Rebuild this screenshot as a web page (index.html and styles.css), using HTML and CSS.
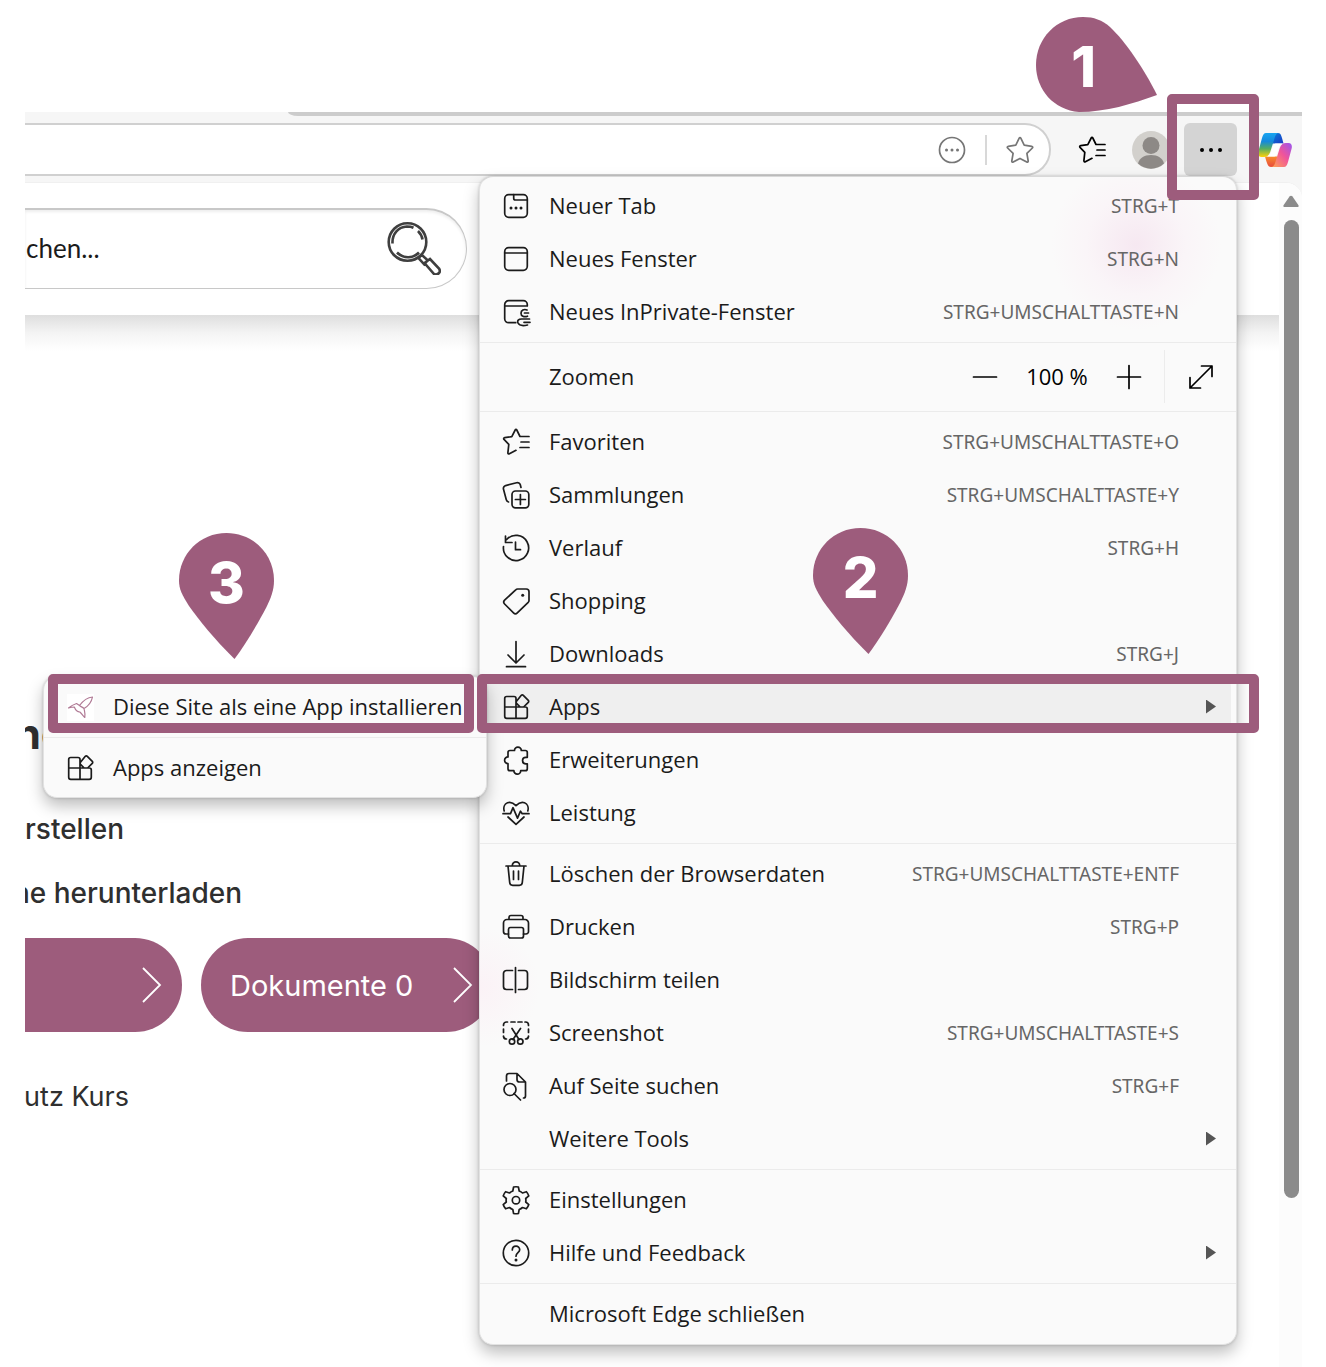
FILE: index.html
```html
<!DOCTYPE html>
<html lang="de">
<head>
<meta charset="utf-8">
<meta name="viewport" content="width=device-width, initial-scale=1">
<title>App in Microsoft Edge installieren</title>
<link rel="stylesheet" href="styles.css">
</head>
<body>
<svg class="sprite" aria-hidden="true">
  <symbol id="i-star-list" viewBox="0 0 32 32"><path d="M20 10.500h9M21 16h8M20 21.500h9M29 10.500h-9l-3.200-6.500c-.4-.8-1.200-.8-1.600 0L11.800 10.700l-7.100 1c-1 .2-1.300 1-.7 1.700l4.800 5-.9 8.300c-.1 1 .7 1.500 1.500 1.100l6.600-3.500"/></symbol>
  <symbol id="i-apps" viewBox="0 0 32 32"><path d="M16 16V7.500a2 2 0 0 0-2-2H6.700a2 2 0 0 0-2 2v17.800a2 2 0 0 0 2 2h18.600a2 2 0 0 0 2-2V18a2 2 0 0 0-2-2zM4.700 16H16v11.300M21.300 4.300a1.400 1.400 0 0 1 2 0l5 5a1.400 1.400 0 0 1 0 2l-4.700 4.700h-3.400l-3.700-3.700a1.400 1.400 0 0 1 0-2z"/></symbol>
</svg>
<div class="browser">
  <div class="tab-edge"></div>
  <header class="toolbar">
    <div class="address">
      <input class="address-input" type="text" aria-label="Adresse">
      <button class="tool" aria-label="Weitere Seitenaktionen"><svg class="icon grey" viewBox="0 0 32 32"><circle cx="16" cy="16" r="12.500"/><path class="dots" d="M10.500 16h.01M16 16h.01M21.500 16h.01"/></svg></button>
      <span class="address-divider"></span>
      <button class="tool" aria-label="Zu Favoriten hinzufügen"><svg class="icon grey" viewBox="0 0 32 32"><path d="M15.200 4.200c.4-.8 1.200-.8 1.600 0l3.400 7 7.600 1.100c.9.100 1.200 1.100.6 1.700l-5.500 5.400 1.300 7.600c.1.900-.7 1.500-1.400 1.100L16 24.400l-6.800 3.700c-.8.400-1.500-.2-1.400-1.100l1.300-7.600L3.600 14c-.6-.6-.3-1.600.6-1.700l7.600-1.100z"/></svg></button>
    </div>
    <button class="tool favorites" aria-label="Favoriten"><svg class="icon"><use href="#i-star-list"/></svg></button>
    <button class="tool profile" aria-label="Profil"><svg class="avatar" viewBox="0 0 38 38"><circle cx="19" cy="19" r="19" fill="#d2d0cc"/><circle cx="19" cy="14.500" r="8.500" fill="#8d8986"/><path d="M6 32.500C7.500 27 12 24 19 24s11.500 3 13 8.500A19 19 0 0 1 6 32.500z" fill="#8d8986"/></svg></button>
    <div class="more-wrap">
      <button class="more" aria-label="Einstellungen und mehr"><svg class="icon" viewBox="0 0 32 32"><path class="big-dots" d="M7 16h.01M16 16h.01M25 16h.01"/></svg></button>
      <span class="marker marker-more"></span>
      <div class="pin pin-one">
        <svg viewBox="0 0 121 95" width="121" height="95"><path d="M47 0C58 0 66 3 74 10C90 25 108 52 121 78C96 87 70 95 43 95C18 93 0 73 0 48C0 21 21 0 47 0z"/></svg>
        <span>1</span>
      </div>
    </div>
    <button class="tool copilot" aria-label="Copilot">
      <svg viewBox="0 0 34 34" width="34" height="34">
        <defs>
          <linearGradient id="ca" x1="0" y1="0" x2="0" y2="1"><stop offset="0" stop-color="#19a5f0"/><stop offset=".35" stop-color="#1489dd"/><stop offset=".65" stop-color="#55ad62"/><stop offset="1" stop-color="#ffd208"/></linearGradient>
          <linearGradient id="cb" x1="1" y1="0" x2="0" y2="1"><stop offset="0" stop-color="#9a55f0"/><stop offset=".45" stop-color="#f0549a"/><stop offset="1" stop-color="#ffa94f"/></linearGradient>
          <linearGradient id="cc" x1="0" y1="0" x2="1" y2="1"><stop offset="0" stop-color="#0b7fd8"/><stop offset="1" stop-color="#1b38c4"/></linearGradient>
          <linearGradient id="cd" x1="0" y1="0" x2="0" y2="1"><stop offset="0" stop-color="#f78b2c"/><stop offset="1" stop-color="#e84a3c"/></linearGradient>
        </defs>
        <path d="M14 0h6c3 0 3.500 3 5.500 10.500H14z" fill="url(#cc)"/>
        <path d="M20 34h-7c-3 0-4-3-6-10.500h12z" fill="url(#cd)"/>
        <path d="M8 0h13c-3 0-3.800 3-5 7l-3.800 12C11 22.500 9 24 6 24H3.500C.5 24-.5 21 .5 18L4 5c1-3.500 2-5 4-5z" fill="url(#ca)"/>
        <path d="M26 34H13c3 0 3.800-3 5-7l3.800-12c1.200-3.500 3.200-5 6.200-5h2.500c3 0 4 3 3 6L30 29c-1 3.500-2 5-4 5z" fill="url(#cb)"/>
        <path d="M19 10.500h6c-2.500.7-3.500 2.500-4.300 5l-1.500 5c-.8 2.500-2 3-4.200 3H9c2.500-.7 3.500-2.500 4.300-5l1.500-5c.8-2.500 2-3 4.200-3z" fill="#fff"/>
      </svg>
    </button>
  </header>

  <div class="viewport">
    <div class="site">
      <div class="site-header">
        <div class="search">
          <input class="search-input" type="text" aria-label="Suchen" value="chen...">
          <button class="tool" aria-label="Suche starten"><svg class="magnifier" viewBox="0 0 54 54"><circle cx="20.500" cy="21" r="18.800"/><path d="M5.500 22.500C5 13 11 6 20 5.500c2.500 0 4.500.3 6.500 1.200M31 10c2.500 2.500 4 5 4.500 8.500M10 31.500c6 6 16 6.500 22 0M31.500 37l3.200-3.200 6 5.500-3.500 4zM37.500 42l5.500-4 9 9.500c2.500 4-1.500 7-5 5.500z"/></svg></button>
        </div>
      </div>
      <main class="content">
        <h1 class="cut cut-title">ne</h1>
        <p class="cut cut-create">erstellen</p>
        <p class="cut cut-download">ne herunterladen</p>
        <div class="pills">
          <a class="pill pill-cut" href="#" aria-label="Weiter"><svg class="chevron" viewBox="0 0 20 36"><path d="M1 1l17 17L1 35"/></svg></a>
          <a class="pill" href="#"><span>Dokumente 0</span><svg class="chevron" viewBox="0 0 20 36"><path d="M1 1l17 17L1 35"/></svg></a>
        </div>
        <p class="cut cut-course">utz Kurs</p>
      </main>
    </div>
    <div class="scrollbar"><svg viewBox="0 0 16 13" width="16" height="13"><path d="M6.500 1.500a2 2 0 0 1 3 0l5.800 8.500c.8 1.200.2 2-1 2H1.700c-1.200 0-1.800-.8-1-2z" fill="#8b8b8b"/></svg><div class="thumb"></div></div>
  </div>

  <nav class="menu" aria-label="Einstellungen und mehr">
    <ul>
      <li><button class="item"><svg class="icon" viewBox="0 0 32 32"><rect x="4.700" y="4.700" width="22.600" height="22.600" rx="4"/><path d="M13.700 4.700v3.500a1.800 1.800 0 0 0 1.800 1.800h11.800"/><path class="dots" d="M11 18h.01M16 18h.01M21 18h.01"/></svg><span>Neuer Tab</span><kbd>STRG+T</kbd></button></li>
      <li><button class="item"><svg class="icon" viewBox="0 0 32 32"><rect x="4.700" y="4.700" width="22.600" height="22.600" rx="4"/><path d="M4.700 10h22.600"/></svg><span>Neues Fenster</span><kbd>STRG+N</kbd></button></li>
      <li><button class="item"><svg class="icon" viewBox="0 0 32 32"><path d="M15.700 26.700h-7a4 4 0 0 1-4-4v-14a4 4 0 0 1 4-4h14.600a4 4 0 0 1 4 4V10H4.700M27 14c-3-1.300-6 .3-6 3.200s3 4.300 6.500 3M24.500 17h4M29.500 23h-8c-3 0-4.500 1.800-3.500 4s5 3 9.500 2M24 26.300h6"/></svg><span>Neues InPrivate-Fenster</span><kbd>STRG+UMSCHALTTASTE+N</kbd></button></li>
    </ul>
    <hr>
    <div class="zoom-row">
      <span class="zoom-label">Zoomen</span>
      <button class="zoom-button" aria-label="Verkleinern"><svg class="icon" viewBox="0 0 32 32"><path d="M4.500 16h23"/></svg></button>
      <span class="zoom-value">100 %</span>
      <button class="zoom-button" aria-label="Vergrößern"><svg class="icon" viewBox="0 0 32 32"><path d="M4.500 16h23M16 4.500v23"/></svg></button>
      <button class="fullscreen" aria-label="Vollbild"><svg class="icon" viewBox="0 0 32 32"><path d="M5 27L27 5M16.500 5H27v10.500M5 16.500V27h10.500"/></svg></button>
    </div>
    <hr>
    <ul>
      <li><button class="item"><svg class="icon"><use href="#i-star-list"/></svg><span>Favoriten</span><kbd>STRG+UMSCHALTTASTE+O</kbd></button></li>
      <li><button class="item"><svg class="icon" viewBox="0 0 32 32"><rect x="12" y="12" width="16.800" height="16.800" rx="3.500"/><path d="M20.400 15.500v10M15.400 20.500h10M21 8.500l-.7-2.700a3 3 0 0 0-3.700-2.100L5.600 6.600a3 3 0 0 0-2.100 3.700l2.800 10.500a3 3 0 0 0 2.200 2.200"/></svg><span>Sammlungen</span><kbd>STRG+UMSCHALTTASTE+Y</kbd></button></li>
      <li><button class="item"><svg class="icon" viewBox="0 0 32 32"><path d="M3.500 14.500a12.600 12.600 0 1 0 3.200-7M5.500 4v6.500H12M15.500 10v7.700h5"/></svg><span>Verlauf</span><kbd>STRG+H</kbd></button></li>
      <li><button class="item"><svg class="icon" viewBox="0 0 32 32"><path d="M17.600 4h8.700A2.700 2.700 0 0 1 29 6.700v8.700c0 .7-.3 1.300-.8 1.900L17.300 27.900a2.700 2.700 0 0 1-3.800 0L4.600 19a2.700 2.700 0 0 1 0-3.800L15.700 4.800c.5-.5 1.200-.8 1.900-.8z"/><path class="dots" d="M22.700 10.300h.01"/></svg><span>Shopping</span></button></li>
      <li><button class="item"><svg class="icon" viewBox="0 0 32 32"><path d="M16 3.500v21M8 17l8 8 8-8M6.500 28.700h19"/></svg><span>Downloads</span><kbd>STRG+J</kbd></button></li>
      <li class="has-submenu">
        <button class="item active"><svg class="icon"><use href="#i-apps"/></svg><span>Apps</span><i class="arrow"></i></button>
        <div class="menu submenu">
          <ul>
            <li class="has-submenu">
              <button class="item"><svg class="icon bird" viewBox="0 0 32 32"><rect width="27" height="27" x="3" y="3"/><path d="M4.500 17c3-2.500 5-3.500 8-4.500l3 2c3-4 7-8 13-8.500-1 5-4 9-8.500 11.500.5 3 1.500 5 .8 9-2.500-2-3-4-5-5.500-3 0-4.300-2-5.500-5-2 0-4 .5-5.800 1zM16 15c1.500 1 2.500 1 4 2.500"/></svg><span>Diese Site als eine App installieren</span></button>
              <span class="marker marker-install"></span>
              <div class="pin pin-three">
                <svg viewBox="0 0 95 126" width="95" height="126"><path d="M47.500 0C74 0 95 21 95 47.500C95 57 92 65 87 75C78 92 66 112 55.500 126C36 107 20 87 10 73C3 62 0 56 0 47.500C0 21 21 0 47.500 0z"/></svg>
                <span>3</span>
              </div>
            </li>
          </ul>
          <hr>
          <ul>
            <li><button class="item"><svg class="icon"><use href="#i-apps"/></svg><span>Apps anzeigen</span></button></li>
          </ul>
        </div>
        <span class="marker marker-apps"></span>
        <div class="pin pin-two">
          <svg viewBox="0 0 95 126" width="95" height="126"><path d="M47.500 0C74 0 95 21 95 47.500C95 57 92 65 87 75C78 92 66 112 55.500 126C36 107 20 87 10 73C3 62 0 56 0 47.500C0 21 21 0 47.500 0z"/></svg>
          <span>2</span>
        </div>
      </li>
      <li><button class="item"><svg class="icon" viewBox="0 0 32 32"><path d="M14.500 6.500a3.400 3.400 0 0 1 6.800 0h4a2 2 0 0 1 2 2v4.800h-1.500a3.200 3.200 0 0 0 0 6.500h1.500v4.900a2 2 0 0 1-2 2h-4.600a3.400 3.400 0 0 1-6.800 0H10a2 2 0 0 1-2-2v-5a3.400 3.400 0 0 1 0-6.800V8.500a2 2 0 0 1 2-2z"/></svg><span>Erweiterungen</span></button></li>
      <li><button class="item"><svg class="icon" viewBox="0 0 32 32"><path d="M4.200 14c-1-3.500.2-7 3.300-8.300 3.500-1.300 6 .3 8.500 3 2.500-2.700 5-4.300 8.500-3 3.100 1.300 4.300 4.800 3.300 8.300M3 16.700h7.500l2.500-6 4.500 10.500 3-7 1.700 2.500H29M8 20l8 7.300 8-7.300"/></svg><span>Leistung</span></button></li>
    </ul>
    <hr>
    <ul>
      <li><button class="item"><svg class="icon" viewBox="0 0 32 32"><path d="M6 8h20M12.300 8V7.500a3.700 3.700 0 0 1 7.400 0V8M8 8l1.700 16.500a3 3 0 0 0 3 2.800h6.600a3 3 0 0 0 3-2.800L24 8M13.500 13v8.500M18.500 13v8.500"/></svg><span>Löschen der Browserdaten</span><kbd>STRG+UMSCHALTTASTE+ENTF</kbd></button></li>
      <li><button class="item"><svg class="icon" viewBox="0 0 32 32"><path d="M9 8.500V6.500a2 2 0 0 1 2-2h10a2 2 0 0 1 2 2v2M8.500 23H6a2.500 2.500 0 0 1-2.500-2.500V12A3.500 3.500 0 0 1 7 8.500h18a3.500 3.500 0 0 1 3.500 3.500v8.500A2.500 2.500 0 0 1 26 23h-2.500"/><rect x="8.500" y="16.500" width="15" height="10.500" rx="2"/></svg><span>Drucken</span><kbd>STRG+P</kbd></button></li>
      <li><button class="item"><svg class="icon" viewBox="0 0 32 32"><path d="M15.500 3.500v25M12.500 6.500H6.500a3 3 0 0 0-3 3v13a3 3 0 0 0 3 3h6M18.500 6.500h6a3 3 0 0 1 3 3v13a3 3 0 0 1-3 3h-6"/></svg><span>Bildschirm teilen</span></button></li>
      <li><button class="item"><svg class="icon" viewBox="0 0 32 32"><path d="M3.500 8.500V8a3 3 0 0 1 3-3h1M11 5h4M18 5h4M25 5h.5a3 3 0 0 1 3 3v.5M3.500 12v3.500M28.500 12v3.500M3.500 19v.500a3 3 0 0 0 3 2.500M28.500 19v.500a3 3 0 0 1-3 2.500M12 11.500l7 11M20.500 11.500l-7.500 11"/><circle cx="12" cy="24.500" r="2.700"/><circle cx="20.300" cy="24.500" r="2.700"/></svg><span>Screenshot</span><kbd>STRG+UMSCHALTTASTE+S</kbd></button></li>
      <li><button class="item"><svg class="icon" viewBox="0 0 32 32"><path d="M6.500 11V6a2.500 2.500 0 0 1 2.500-2.500h8l8.500 8.500v14a2 2 0 0 1-2 2M17 3.500V9.500a2.500 2.500 0 0 0 2.500 2.500h6M14 23.500l6.500 6.500"/><circle cx="10" cy="19.500" r="6"/></svg><span>Auf Seite suchen</span><kbd>STRG+F</kbd></button></li>
      <li><button class="item no-icon"><span>Weitere Tools</span><i class="arrow"></i></button></li>
    </ul>
    <hr>
    <ul>
      <li><button class="item"><svg class="icon" viewBox="0 0 32 32"><path d="M13.600 3q2.400-.5 4.800 0l.8 4q2 .8 3.300 2l3.900-1.300q1.700 1.900 2.400 4.200L25.700 14.500q.4 2 0 3.500l3.100 2.600q-.7 2.300-2.400 4.200l-3.900-1.300q-1.400 1.200-3.300 2l-.8 4q-2.400.5-4.800 0l-.8-4q-1.900-.8-3.300-2L5.600 24.800Q3.900 22.900 3.200 20.600L6.300 18q-.4-1.500 0-3.500L3.200 11.900q.7-2.300 2.400-4.200L9.500 9q1.400-1.200 3.300-2z"/><circle cx="16" cy="16.200" r="3.700"/></svg><span>Einstellungen</span></button></li>
      <li><button class="item"><svg class="icon" viewBox="0 0 32 32"><circle cx="16" cy="16" r="12.700"/><path d="M12.300 13c0-5 7.400-5 7.400-.3 0 3-3.700 3-3.700 6.500"/><path class="dots" d="M16 23h.01"/></svg><span>Hilfe und Feedback</span><i class="arrow"></i></button></li>
    </ul>
    <hr>
    <ul>
      <li><button class="item no-icon"><span>Microsoft Edge schließen</span></button></li>
    </ul>
  </nav>
</div>
</body>
</html>
```
FILE: styles.css
```css
* { box-sizing: border-box; }

:root {
  --plum: #9d5c7c;
  --menu: #fafafa;
}

body {
  margin: 0;
  background: #fff;
  color: #1b1b1b;
  font-family: "Open Sans", "Noto Sans", sans-serif;
}

button, input { font: inherit; color: inherit; }
button { border: 0; background: none; padding: 0; }
ul { list-style: none; margin: 0; padding: 0; }
.sprite { position: absolute; width: 0; height: 0; }

/* Browser window */
.browser {
  position: relative;
  display: flex;
  flex-direction: column;
  min-height: calc(100vh - 112px);
  margin: 112px 24px 0 25px;
  background: #f6f6f6;
}

.tab-edge {
  height: 4px;
  margin-left: 263px;
  background: #ccc;
  border-bottom-left-radius: 10px 4px;
}

.toolbar {
  display: flex;
  align-items: center;
  padding: 7px 10px 6px 0;
}

.address {
  display: flex;
  flex: 1;
  align-items: center;
  height: 53px;
  padding-right: 13px;
  background: #fff;
  border: 2px solid #d0d0d0;
  border-left: 0;
  border-radius: 0 26px 26px 0;
}

.address-input, .search-input {
  flex: 1;
  min-width: 0;
  padding: 0;
  border: 0;
  outline: 0;
  background: none;
}

.address-divider {
  width: 2px;
  height: 30px;
  margin: 0 17px;
  background: #d8d8d8;
}

.tool { display: flex; flex: none; }
.favorites { margin-left: 25px; color: #000; }
.profile { margin-left: 24px; }
.avatar { width: 38px; height: 38px; }
.copilot { margin-left: 21px; }

.icon {
  flex: none;
  width: 32px;
  height: 32px;
  fill: none;
  stroke: currentColor;
  stroke-width: 1.7;
  stroke-linecap: round;
  stroke-linejoin: round;
}
.icon.grey { color: #767676; }
.icon .dots { stroke-width: 3; }
.icon .big-dots { stroke-width: 4; }

.more-wrap { position: relative; margin-left: 14px; }
.more {
  display: flex;
  align-items: center;
  justify-content: center;
  width: 53px;
  height: 53px;
  color: #000;
  background: #d4d4d4;
  border-radius: 6px;
}

/* Web page */
.viewport {
  display: flex;
  flex: 1;
  background: #fff;
  border-top: 1px solid #f0f0f0;
  border-top-right-radius: 16px;
}
.site { flex: 1; min-width: 0; overflow: hidden; }
.site-header { height: 132px; padding-top: 25px; }

.search {
  display: flex;
  align-items: center;
  width: 442px;
  height: 81px;
  padding: 0 25px 2px 1px;
  border: solid #c8c8c8;
  border-width: 2px 1px 1px 0;
  border-radius: 0 41px 41px 0;
  box-shadow: inset 0 2px 3px #eee;
  font: 26px Lato, sans-serif;
}
.magnifier {
  width: 54px;
  height: 54px;
  fill: none;
  stroke: #3f3f3f;
  stroke-width: 2.6;
}

.content {
  padding-top: 389px;
  background: linear-gradient(#dedede, #f4f4f4 18px, #fff 36px) no-repeat 0 0 / 100% 36px;
  color: #2f2f2f;
  font-family: Inter, sans-serif;
}
.cut {
  display: flex;
  justify-content: flex-end;
  margin: 0;
  overflow: hidden;
  white-space: nowrap;
}
.cut-title { width: 41px; font-size: 42px; line-height: 60px; }
.cut-create { width: 99px; margin-top: 47px; font-size: 28px; font-weight: 500; line-height: 36px; }
.cut-download { width: 217px; margin-top: 28px; font-size: 28px; font-weight: 500; line-height: 36px; }
.cut-course { width: 104px; margin-top: 47px; font-size: 27px; line-height: 36px; }

.pills { display: flex; gap: 19px; margin-top: 27px; }
.pill {
  display: flex;
  flex: none;
  align-items: center;
  justify-content: space-between;
  width: 292px;
  height: 94px;
  padding: 0 20px 0 29px;
  border-radius: 47px;
  background: var(--plum);
  color: #fff;
  font-size: 29px;
  text-decoration: none;
}
.pill-cut { justify-content: flex-end; width: 157px; border-radius: 0 47px 47px 0; }
.chevron { width: 20px; height: 36px; fill: none; stroke: #fff; stroke-width: 1.8; }

.scrollbar {
  display: flex;
  flex-direction: column;
  align-items: center;
  gap: 12px;
  width: 23px;
  padding: 12px 0 169px 1px;
  background: #fcfcfc;
  border-top-right-radius: 16px;
}
.thumb { flex: 1; width: 15px; border-radius: 8px; background: #8b8b8b; }

/* Menus */
.menu {
  position: absolute;
  top: 64px;
  right: 65px;
  width: 758px;
  padding: 2px 0 4px;
  background:
    radial-gradient(circle at 656px 68px, #f6e8f1, #faf5f8 50px, transparent 85px),
    radial-gradient(circle at 0 810px, #fbf2f6, transparent 60px),
    var(--menu);
  border: 1px solid #e2e2e2;
  border-top-color: #d8d8d8;
  border-radius: 14px;
  box-shadow: 0 8px 16px rgba(0, 0, 0, .26), 0 0 3px rgba(0, 0, 0, .2);
  font-size: 22px;
}
.menu hr { margin: 4px 0 3px; border: 0; border-top: 1px solid #ebebeb; }

.item {
  display: flex;
  align-items: center;
  gap: 17px;
  width: calc(100% - 10px);
  height: 53px;
  margin: 0 5px;
  padding: 0 15px;
  border-radius: 6px;
  text-align: left;
  white-space: nowrap;
}
.item span { flex: 1; padding-bottom: 2px; }
.item.no-icon { padding-left: 64px; }
.item.active { background: #efefef; }
.item kbd { margin-right: 37px; color: #666; font-family: "Noto Sans", sans-serif; font-size: 19px; }

.arrow {
  width: 10px;
  height: 14px;
  background: #555;
  clip-path: polygon(0 0, 100% 50%, 0 100%);
}

.zoom-row { display: flex; align-items: center; height: 61px; padding-left: 69px; color: #000; }
.zoom-label { flex: 1; padding-bottom: 2px; color: #1b1b1b; }
.zoom-button { display: flex; justify-content: center; width: 48px; }
.zoom-value { width: 96px; padding-bottom: 2px; text-align: center; }
.fullscreen {
  display: flex;
  align-items: center;
  justify-content: center;
  width: 72px;
  height: 53px;
  margin-left: 11px;
  border-left: 1px solid #ececec;
}

.has-submenu { position: relative; }
.submenu {
  top: -4px;
  right: calc(100% - 7px);
  width: 444px;
  padding: 3px 0;
  background: var(--menu);
}
.bird { stroke: #b07a95; stroke-width: 1.2; }
.bird rect { fill: #fff; stroke: none; }

/* Step markers */
.marker { position: absolute; border: 10px solid var(--plum); border-radius: 5px; pointer-events: none; }
.marker-more { z-index: 2; inset: -29px -22px -24px -17px; }
.marker-apps { inset: -6px -23px 0 -3px; }
.marker-install { inset: -6px 12px 0 4px; }

.pin { position: absolute; z-index: 3; color: #fff; font: 800 56px/56px Inter, sans-serif; }
.pin svg { display: block; fill: var(--plum); }
.pin span { position: absolute; top: 22px; left: 0; width: 95px; text-align: center; }
.pin-one { top: -106px; left: -148px; }
.pin-two { bottom: 79px; left: 333px; }
.pin-three { bottom: 74px; left: 135px; }
```
